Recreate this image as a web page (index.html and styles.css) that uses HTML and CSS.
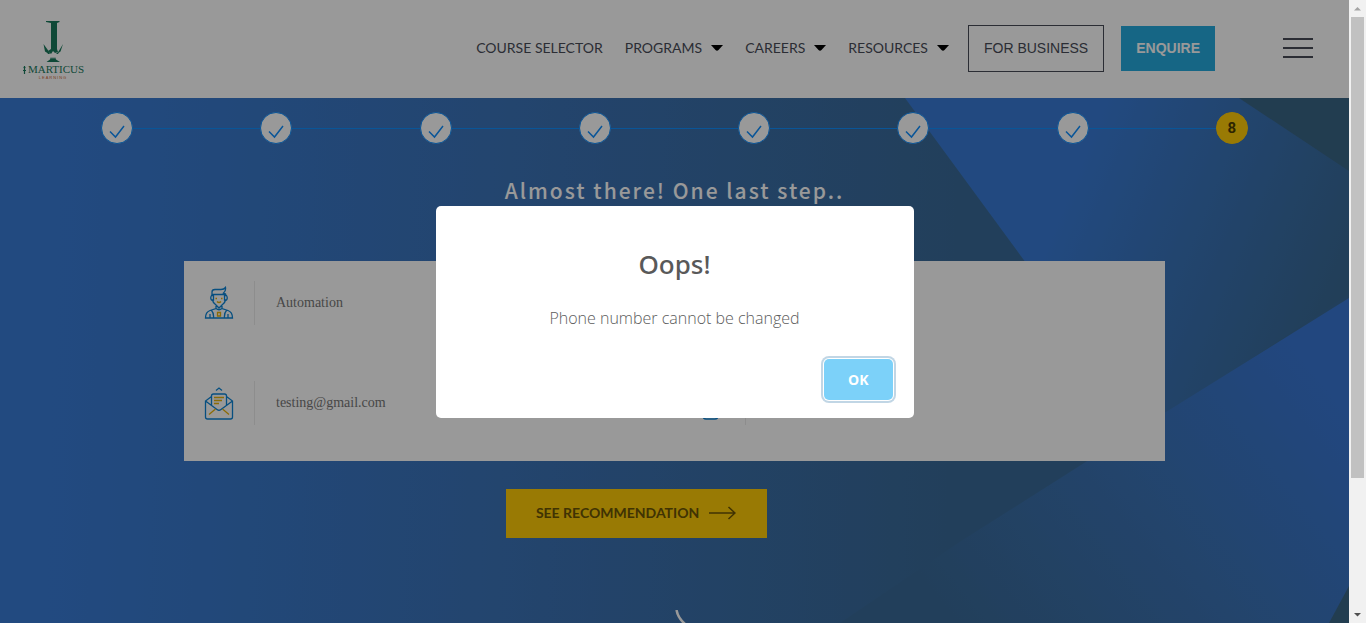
FILE: index.html
```html
<!DOCTYPE html>
<html lang="en">
<head>
<meta charset="utf-8">
<title>Imarticus Learning - Course Selector</title>
<link rel="stylesheet" href="styles.css">
</head>
<body>
<svg class="sprite" aria-hidden="true">
  <symbol id="tick" viewBox="0 0 16 16"><path d="M1 8.500 6.500 14 15 3" fill="none" stroke="currentColor" stroke-width="1.500"/></symbol>
  <symbol id="caret" viewBox="0 0 12 6"><path d="M0 0H12L7.500 5Q6 6.600 4.500 5Z" fill="currentColor"/></symbol>
</svg>
<div class="window">
  <div class="page">
    <header class="header">
      <a class="logo" href="#" aria-label="Imarticus Learning">
        <svg width="66" height="60" viewBox="0 0 66 60">
          <g fill="#1a7a5c">
            <path d="M26 1H39.500V2L37 3V29L38 32 35 33 33 31 31 34 28 31 31 29V3L26 2Z"/>
            <path d="M23.500 24 30 33 29 34 25 31.500ZM43 24 37 34 40.500 31.500ZM25 29 30 34H28ZM41 29 36 34H38Z"/>
            <path d="M26.500 42 30 39.500 31 37 32 39 33 37 34 39 35 37 36 39.500 40 42Z"/>
          </g>
          <path d="M4.500 46V54M3 50.500H6M3.500 47.500H5.500" stroke="#1a7a5c" stroke-width="1.200"/>
          <text x="36" y="53" class="logo-name">MARTICUS</text>
          <text x="33" y="59" class="logo-sub">LEARNING</text>
        </svg>
      </a>
      <nav class="nav">
        <a href="#">COURSE SELECTOR</a>
        <a href="#">PROGRAMS<svg class="caret"><use href="#caret"/></svg></a>
        <a href="#">CAREERS<svg class="caret"><use href="#caret"/></svg></a>
        <a href="#">RESOURCES<svg class="caret"><use href="#caret"/></svg></a>
      </nav>
      <button class="business" type="button">FOR BUSINESS</button>
      <button class="enquire" type="button">ENQUIRE</button>
      <button class="burger" type="button" aria-label="Menu"><span></span><span></span><span></span></button>
    </header>

    <main class="main">
      <svg class="backdrop" viewBox="0 0 1349 525" preserveAspectRatio="none" aria-hidden="true">
        <defs>
          <linearGradient id="base" gradientUnits="userSpaceOnUse" x1="60" y1="0" x2="960" y2="30">
            <stop offset="0" stop-color="#397cd6"/><stop offset="0.500" stop-color="#3b73b8"/><stop offset="1" stop-color="#3a6a98"/>
          </linearGradient>
          <linearGradient id="facet" gradientUnits="userSpaceOnUse" x1="1080" y1="70" x2="1350" y2="180">
            <stop offset="0" stop-color="#397bd5"/><stop offset="1" stop-color="#3a6993"/>
          </linearGradient>
          <linearGradient id="wedge" gradientUnits="userSpaceOnUse" x1="1310" y1="270" x2="970" y2="540">
            <stop offset="0" stop-color="#3977d4"/><stop offset="0.500" stop-color="#3b72b3"/><stop offset="1" stop-color="#3a6a98"/>
          </linearGradient>
        </defs>
        <rect width="1349" height="525" fill="url(#base)"/>
        <path d="M905 0H1349V196L1147 330Z" fill="url(#facet)"/>
        <path d="M1239 0H1349V73Z" fill="#3a6685"/>
        <path d="M1349 200 1092 360 958 445 840 525H1349Z" fill="url(#wedge)"/>
        <path d="M1349 488V525H1329Z" fill="#3a6685"/>
      </svg>
      <ol class="steps">
        <li class="step"><svg><use href="#tick"/></svg></li>
        <li class="step"><svg><use href="#tick"/></svg></li>
        <li class="step"><svg><use href="#tick"/></svg></li>
        <li class="step"><svg><use href="#tick"/></svg></li>
        <li class="step"><svg><use href="#tick"/></svg></li>
        <li class="step"><svg><use href="#tick"/></svg></li>
        <li class="step"><svg><use href="#tick"/></svg></li>
        <li class="step current">8</li>
      </ol>
      <h1 class="heading">Almost there! One last step..</h1>
      <form class="card">
        <div class="field">
          <label for="name" aria-label="Name">
            <svg width="30" height="34" viewBox="0 0 30 34" fill="none" stroke="#0d84d6" stroke-width="1.300">
              <path d="M8 9V6Q8 3.500 11 3.500H17Q20 3.500 21.500 1.500 22 5 19.500 7L21.500 8V10M8 8.500H21.500M7.500 9.500H9.500V14H7.500Q6 12 7.500 9.500ZM20.500 9.500H22.500Q24 12 22.500 14H20.500ZM8.500 14Q9 16.500 11 18L15 22 19 18Q21 16.500 21.500 14M12 20V22.500L6 24.500Q1.500 26 1.500 32H28.500Q28.500 26 24 24.500L18 22.500V20M12 22.500Q15 25 18 22.500M6 32V28M9.500 32Q10 27 7.500 24.500M24 32V28M20.500 32Q20 27 22.500 24.500"/>
              <path d="M11.500 12.500H13M17 12.500H18.500M13 15.500Q15 17.500 17 15.500M13.500 26.500H16.500V30H13.500Z" stroke="#e8b40c"/>
            </svg>
          </label>
          <input id="name" type="text" value="Automation">
        </div>
        <div class="field"></div>
        <div class="field">
          <label for="email" aria-label="Email">
            <svg width="30" height="34" viewBox="0 0 30 34" fill="none" stroke="#0d84d6" stroke-width="1.300">
              <path d="M12 4.500 15 2 18 4.500M7.500 19V10Q7.500 8 9.500 8H20.500Q22.500 8 22.500 10V19M7.500 10.500 1.500 15V31Q1.500 33 3.500 33H26.500Q28.500 33 28.500 31V15L22.500 10.500M1.500 15 13 23.500Q15 25 17 23.500L28.500 15"/>
              <path d="M10 11.500H20M10 14.500H18M10 17.500H15M5 28.500 11.500 23M25 28.500 18.500 23" stroke="#e8b40c"/>
            </svg>
          </label>
          <input id="email" type="email" value="testing@gmail.com">
        </div>
        <div class="field">
          <label for="phone" aria-label="Phone">
            <svg width="30" height="34" viewBox="0 0 30 34" fill="none" stroke="#0d84d6" stroke-width="1.300">
              <rect x="8" y="2" width="15" height="31" rx="3"/><path d="M13 29H18"/>
            </svg>
          </label>
          <input id="phone" type="tel" readonly>
        </div>
      </form>
      <button class="recommend" type="button">SEE RECOMMENDATION
        <svg width="27" height="14" viewBox="0 0 27 14" fill="none" stroke="currentColor" stroke-width="1.500"><path d="M0 7H26M19.500 1 26 7 19.500 13"/></svg>
      </button>
      <svg class="loader" width="44" height="44" viewBox="0 0 44 44" fill="none" stroke="#fff" stroke-width="2.500"><path d="M1.500 0Q3 8 10 14T24 20"/></svg>
    </main>

    <div class="overlay">
      <section class="modal" role="dialog" aria-modal="true" aria-labelledby="modal-title">
        <h2 class="modal-title" id="modal-title">Oops!</h2>
        <p class="modal-text">Phone number cannot be changed</p>
        <div class="modal-footer"><button class="ok" type="button">OK</button></div>
      </section>
    </div>
  </div>
  <div class="scrollbar" aria-hidden="true">
    <svg width="17" height="17"><path d="M5 10.500 8.500 7 12 10.500Z" fill="#a3a3a3"/></svg>
    <div class="track"><div class="thumb"></div></div>
    <svg width="17" height="17"><path d="M5 7 8.500 10.500 12 7Z" fill="#505050"/></svg>
  </div>
</div>
</body>
</html>
```
FILE: styles.css
```css
* { box-sizing: border-box; }
body { margin: 0; font-family: Lato, sans-serif; }
button { font: inherit; border: 0; border-radius: 0; cursor: pointer; }
a { text-decoration: none; color: inherit; }
.sprite { display: none; }

.window { display: flex; height: 100vh; overflow: hidden; }
.page { position: relative; flex: 1; min-width: 0; display: flex; flex-direction: column; overflow: hidden; }

.header {
  display: flex;
  align-items: center;
  flex: none;
  height: 98px;
  padding: 0 36px 2px 20px;
  background: #fff;
  color: #484c58;
}
.logo { margin-right: auto; padding-top: 4px; }
.logo svg { display: block; }
.logo-name { font: 11px "Liberation Serif", serif; fill: #1a7a5c; text-anchor: middle; }
.logo-sub { font: 4px "Liberation Sans", sans-serif; letter-spacing: 1px; fill: #d06a35; text-anchor: middle; }
.nav { display: flex; gap: 22px; font-size: 14px; line-height: 20px; white-space: nowrap; }
.nav a { display: flex; align-items: center; gap: 9px; }
.caret { width: 12px; height: 6px; color: #000; }
.business, .enquire { font-family: "Liberation Sans", Arial, sans-serif; }
.business {
  height: 47px;
  margin-left: 19px;
  padding: 0 15px;
  border: 1px solid #484c58;
  background: none;
  color: #484c58;
  font-size: 14px;
}
.enquire { height: 45px; margin-left: 17px; padding: 0 15px; background: #26aade; color: #fff; font-size: 14px; font-weight: 700; }
.burger { display: flex; flex-direction: column; gap: 7px; width: 30px; margin-left: 68px; padding: 0; background: none; }
.burger span { height: 2px; background: #484c58; }

.main { position: relative; z-index: 0; flex: 1; min-height: 0; overflow: hidden; padding-top: 14px; }
.backdrop { position: absolute; inset: 0; z-index: -1; width: 100%; height: 100%; }
.steps {
  display: flex;
  justify-content: space-between;
  width: 85%;
  margin: 0 auto;
  padding: 0;
  list-style: none;
  background: linear-gradient(#108efe, #108efe) center / 100% 1px no-repeat;
}
.step {
  display: flex;
  align-items: center;
  justify-content: center;
  width: 32px;
  height: 32px;
  border: 1px solid #108efe;
  border-radius: 50%;
  background: #fff;
  color: #108efe;
}
.step svg { width: 16px; height: 16px; margin-top: 6px; }
.step.current { border-color: #ffcb08; background: #ffcb08; color: #4d3d02; font: 700 15px Roboto, sans-serif; }
.heading {
  margin: 28px 0 0;
  color: #fff;
  font: 500 21px/36px "Noto Sans CJK SC", sans-serif;
  letter-spacing: 2px;
  text-align: center;
}
.card { display: grid; grid-template-columns: 1fr 1fr; width: 981px; max-width: 90%; margin: 53px auto 0; background: #fff; }
.field { display: flex; align-items: flex-start; height: 100px; padding: 20px; }
.field label { display: flex; align-items: center; flex: none; width: 51px; height: 44px; border-right: 1px solid #ececec; }
.field input {
  flex: 1;
  min-width: 0;
  height: 44px;
  padding: 0 21px;
  border: 0;
  background: none;
  color: #777;
  font: 14px "Liberation Serif", serif;
}
.recommend {
  display: flex;
  align-items: center;
  gap: 10px;
  height: 49px;
  margin: 28px 0 0 37.5%;
  padding: 0 31px 2px 30px;
  background: #ffcb08;
  color: #6b5505;
  font-size: 14px;
  font-weight: 700;
}
.loader { display: block; margin: 72px 0 0 50%; }

.overlay { position: absolute; inset: 0; z-index: 1; display: flex; align-items: center; justify-content: center; background: rgba(0, 0, 0, 0.4); }
.modal { width: 478px; max-width: 90%; border-radius: 5px; background: #fff; font-family: "Open Sans", sans-serif; text-align: center; }
.modal-title { margin: 38px 0 0; color: #595959; font: 500 26px/40px "Noto Sans", sans-serif; }
.modal-text { margin: 24px 0 0; color: #5c5c5c; font-weight: 300; font-size: 16px; line-height: 20px; }
.modal-footer { display: flex; justify-content: flex-end; padding: 31px 21px 18px; }
.ok {
  height: 41px;
  padding: 0 24px;
  border-radius: 5px;
  background: #7cd1f9;
  box-shadow: 0 0 0 1px #fff, 0 0 0 3px rgba(43, 114, 165, 0.29);
  color: #fff;
  font-size: 14px;
  font-weight: 700;
}

.scrollbar { display: flex; flex-direction: column; flex: none; width: 17px; background: #f1f1f1; }
.scrollbar svg { flex: none; }
.track { flex: 1; padding: 0 2px; }
.thumb { height: 78.300%; background: #c1c1c1; }
```
